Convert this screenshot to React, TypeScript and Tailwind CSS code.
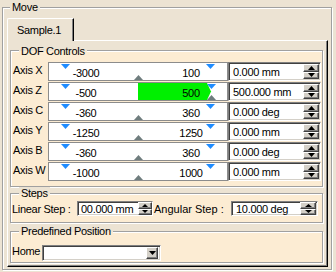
import React from "react";

const BG = "bg-[#ece3d3]";
const GRP = "bg-[#fcecd3]";
const ETCH = "border border-[#a0a0a0] shadow-[inset_1px_1px_0_#ffffff,1px_1px_0_#ffffff]";
const SUNKEN =
  "border border-t-[#808080] border-l-[#808080] border-r-white border-b-white shadow-[inset_1px_1px_0_#404040,inset_-1px_-1px_0_#d4d0c8]";
const RAISED =
  "border border-t-white border-l-white border-r-[#404040] border-b-[#404040] shadow-[inset_-1px_-1px_0_#808080] bg-[#d4d0c8]";

function Legend({ children, cls }: { children: React.ReactNode; cls: string }) {
  return (
    <span className={`absolute px-[2px] leading-[12px] whitespace-nowrap ${cls}`}>{children}</span>
  );
}

function Up({ w, h }: { w: number; h: number }) {
  return (
    <svg width={w} height={h} viewBox={`0 0 ${w} ${h}`}>
      <polygon points={`${w / 2},0 ${w},${h} 0,${h}`} fill="#000" />
    </svg>
  );
}
function Down({ w, h }: { w: number; h: number }) {
  return (
    <svg width={w} height={h} viewBox={`0 0 ${w} ${h}`}>
      <polygon points={`0,0 ${w},0 ${w / 2},${h}`} fill="#000" />
    </svg>
  );
}

function Spinner({ cls, tw, th }: { cls: string; tw: number; th: number }) {
  return (
    <div className={`flex flex-col shrink-0 ${cls}`}>
      <div className={`flex-1 flex items-center justify-center ${RAISED}`}>
        <Up w={tw} h={th} />
      </div>
      <div className={`flex-1 flex items-center justify-center ${RAISED}`}>
        <Down w={tw} h={th} />
      </div>
    </div>
  );
}

function Field({ text, cls, pad, spin }: { text: string; cls: string; pad: string; spin: React.ReactNode }) {
  return (
    <div className={`flex items-center shrink-0 bg-white ${SUNKEN} ${cls}`}>
      <span className={`flex-1 leading-[12px] whitespace-nowrap overflow-hidden ${pad}`}>{text}</span>
      {spin}
    </div>
  );
}

function Slider({ min, max, active }: { min: string; max: string; active?: boolean }) {
  return (
    <div className="relative flex items-start shrink-0 w-[180px] h-[19px] bg-white border border-[#8c8c8c] pt-[4px]">
      {active && (
        <svg className="absolute left-0 top-0" width="178" height="17" viewBox="0 0 178 17">
          <polygon points="89,0 158,0 162,8.5 158,17 89,17" fill="#00f000" />
        </svg>
      )}
      <svg className="absolute left-[12px] top-[1px]" width="9" height="5" viewBox="0 0 9 5">
        <polygon points="0,0 9,0 4.5,5" fill="#1f8cff" />
      </svg>
      <svg
        className={`absolute top-[1px] ${active ? "left-[158px]" : "left-[157px]"}`}
        width="9"
        height="5"
        viewBox="0 0 9 5"
      >
        <polygon points="0,0 9,0 4.5,5" fill="#1f8cff" />
      </svg>
      <svg
        className={`absolute bottom-0 ${active ? "left-[158px]" : "left-[85px]"}`}
        width="9"
        height="5"
        viewBox="0 0 9 5"
      >
        <polygon points="4.5,0 9,5 0,5" fill="#6f7d7e" />
      </svg>
      <span className="relative w-[40px] ml-[17px] text-center leading-[12px]">{min}</span>
      <span className="relative w-[40px] ml-[65px] text-center leading-[12px]">{max}</span>
    </div>
  );
}

const rows: [string, string, string, string, boolean][] = [
  ["Axis X", "-3000", "100", "0.000 mm", false],
  ["Axis Z", "-500", "500", "500.000 mm", true],
  ["Axis C", "-360", "360", "0.000 deg", false],
  ["Axis Y", "-1250", "1250", "0.000 mm", false],
  ["Axis B", "-360", "360", "0.000 deg", false],
  ["Axis W", "-1000", "1000", "0.000 mm", false],
];

export default function App() {
  return (
    <div
      className={`w-[336px] h-[272px] overflow-hidden ${BG} pt-[7px] text-[11px] tracking-[-0.3px] text-black font-['Liberation_Sans',Arial,sans-serif]`}
    >
      {/* Move group */}
      <div className={`relative ml-[2px] w-[330px] h-[263px] ${ETCH} pt-[10px] pl-[4px]`}>
        <Legend cls={`left-[7px] top-[-7px] ${BG}`}>Move</Legend>

        {/* Tab */}
        <div
          className={`relative z-10 w-[67px] h-[23px] -mb-[1px] ${BG} border border-b-0 border-t-white border-l-white border-r-black shadow-[inset_-1px_0_0_#808080] rounded-tl-[2px] pl-[9px] pt-[5px] leading-[12px]`}
        >
          Sample.1
        </div>

        {/* Tab panel */}
        <div
          className={`w-[321px] h-[227px] ${BG} border border-t-white border-l-white border-r-black border-b-black shadow-[inset_-1px_-1px_0_#808080] flex flex-col`}
        >
          {/* DOF Controls */}
          <div className={`relative mt-[9px] ml-[2px] w-[313px] h-[137px] ${ETCH} ${GRP} pt-[11px] pl-[2px] flex flex-col gap-[1px]`}>
            <Legend cls="left-[8px] top-[-6px] bg-[linear-gradient(#ece3d3_6px,#fcecd3_6px)]">DOF Controls</Legend>
            {rows.map(([label, min, max, val, active]) => (
              <div key={label} className="flex items-start h-[19px]">
                <span className="w-[35px] shrink-0 pt-[2px] leading-[12px] whitespace-nowrap">{label}</span>
                <Slider min={min} max={max} active={active} />
                <Field
                  text={val}
                  cls="w-[93px] h-[19px]"
                  pad="pl-[4px]"
                  spin={<Spinner cls="w-[16px] h-[15px] mr-[1px]" tw={7} th={4} />}
                />
              </div>
            ))}
          </div>

          {/* Steps */}
          <div className={`relative mt-[6px] ml-[2px] w-[313px] h-[30px] ${ETCH} ${GRP} pt-[7px] pl-[1px]`}>
            <Legend cls="left-[8px] top-[-7px] bg-[linear-gradient(#ece3d3_7px,#fcecd3_7px)]">Steps</Legend>
            <div className="flex items-center h-[15px]">
              <span className="w-[65px] shrink-0 leading-[12px] whitespace-nowrap">Linear Step :</span>
              <Field
                text="00.000 mm"
                cls="w-[76px] h-[15px]"
                pad="pl-[3px]"
                spin={<Spinner cls="w-[14px] h-[13px]" tw={6} th={3} />}
              />
              <span className="w-[78px] shrink-0 pl-[1px] tracking-[0px] leading-[12px] whitespace-nowrap">
                Angular Step :
              </span>
              <Field
                text="10.000 deg"
                cls="w-[87px] h-[15px]"
                pad="pl-[4px]"
                spin={<Spinner cls="w-[16px] h-[13px] mr-[1px]" tw={7} th={3} />}
              />
            </div>
          </div>

          {/* Predefined Position */}
          <div className={`relative mt-[8px] ml-[2px] w-[313px] h-[32px] ${ETCH} ${GRP} pt-[13px] pl-[1px]`}>
            <Legend cls="left-[8px] top-[-7px] bg-[linear-gradient(#ece3d3_7px,#fcecd3_7px)]">
              Predefined Position
            </Legend>
            <div className="flex items-start h-[16px]">
              <span className="w-[30px] shrink-0 leading-[12px] pt-0">Home</span>
              <div className={`flex items-center justify-end w-[119px] h-[16px] bg-white ${SUNKEN}`}>
                <div className={`flex items-center justify-center w-[12px] h-[12px] mr-[2px] ${RAISED}`}>
                  <Down w={7} h={4} />
                </div>
              </div>
            </div>
          </div>
        </div>
      </div>
    </div>
  );
}
